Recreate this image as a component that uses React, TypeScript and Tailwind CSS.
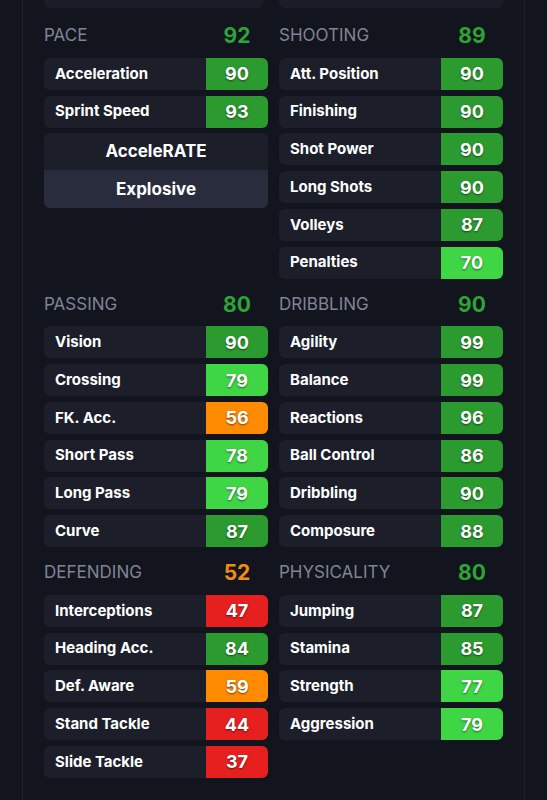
import React from 'react';

type Stat = { label: string; value: number };

interface Group {
  title: string;
  total: number;
  stats: Stat[];
  playstyle?: boolean;
}

const groups: Group[] = [
  {
    title: 'PACE',
    total: 92,
    stats: [
      { label: 'Acceleration', value: 90 },
      { label: 'Sprint Speed', value: 93 },
    ],
    playstyle: true,
  },
  {
    title: 'SHOOTING',
    total: 89,
    stats: [
      { label: 'Att. Position', value: 90 },
      { label: 'Finishing', value: 90 },
      { label: 'Shot Power', value: 90 },
      { label: 'Long Shots', value: 90 },
      { label: 'Volleys', value: 87 },
      { label: 'Penalties', value: 70 },
    ],
  },
  {
    title: 'PASSING',
    total: 80,
    stats: [
      { label: 'Vision', value: 90 },
      { label: 'Crossing', value: 79 },
      { label: 'FK. Acc.', value: 56 },
      { label: 'Short Pass', value: 78 },
      { label: 'Long Pass', value: 79 },
      { label: 'Curve', value: 87 },
    ],
  },
  {
    title: 'DRIBBLING',
    total: 90,
    stats: [
      { label: 'Agility', value: 99 },
      { label: 'Balance', value: 99 },
      { label: 'Reactions', value: 96 },
      { label: 'Ball Control', value: 86 },
      { label: 'Dribbling', value: 90 },
      { label: 'Composure', value: 88 },
    ],
  },
  {
    title: 'DEFENDING',
    total: 52,
    stats: [
      { label: 'Interceptions', value: 47 },
      { label: 'Heading Acc.', value: 84 },
      { label: 'Def. Aware', value: 59 },
      { label: 'Stand Tackle', value: 44 },
      { label: 'Slide Tackle', value: 37 },
    ],
  },
  {
    title: 'PHYSICALITY',
    total: 80,
    stats: [
      { label: 'Jumping', value: 87 },
      { label: 'Stamina', value: 85 },
      { label: 'Strength', value: 77 },
      { label: 'Aggression', value: 79 },
    ],
  },
];

function boxColor(v: number) {
  if (v >= 80) return 'bg-[#2b9b30]';
  if (v >= 70) return 'bg-[#3fd646]';
  if (v >= 50) return 'bg-[#ff8b00]';
  return 'bg-[#e61f1f]';
}

function totalColor(v: number) {
  if (v >= 70) return 'text-[#2ea337]';
  if (v >= 50) return 'text-[#f28b12]';
  return 'text-[#e61f1f]';
}

function StatRow({ stat }: { stat: Stat }) {
  return (
    <div className="flex h-8 overflow-hidden rounded-[6px] bg-[#1c1f2a]">
      <div className="flex flex-1 items-center pl-[11px] text-[15px] font-bold text-white">
        {stat.label}
      </div>
      <div
        className={`flex w-[62px] items-center justify-center text-[18px] font-bold text-white [text-shadow:0_1px_2px_rgba(0,0,0,0.55)] ${boxColor(stat.value)}`}
      >
        {stat.value}
      </div>
    </div>
  );
}

function Section({ group }: { group: Group }) {
  return (
    <div className="flex flex-col gap-[5.75px]">
      <div className="flex h-8 items-center justify-between">
        <span className="text-[17px] text-[#7f8496]">{group.title}</span>
        <span className={`w-[62px] text-center text-[21px] font-bold ${totalColor(group.total)}`}>
          {group.total}
        </span>
      </div>
      {group.stats.map((s) => (
        <StatRow key={s.label} stat={s} />
      ))}
      {group.playstyle && (
        <div className="overflow-hidden rounded-[6px] text-[17px] font-bold text-white">
          <div className="flex h-[37px] items-center justify-center bg-[#1c1f2a]">AcceleRATE</div>
          <div className="flex h-[38px] items-center justify-center bg-[#292c3d]">Explosive</div>
        </div>
      )}
    </div>
  );
}

export default function App() {
  return (
    <div className="min-h-[800px] bg-[#12151d] font-['Inter',sans-serif]">
      <div className="mx-[22px] min-h-[800px] border-x border-[#1d212b] px-[21px]">
        <div className="grid grid-cols-2 gap-x-[11px] gap-y-[10px]">
          <div className="mb-[2px] h-[8px] w-[219px] rounded-b-[6px] bg-[#1a1d27]" />
          <div className="mb-[2px] h-[8px] rounded-b-[6px] bg-[#1a1d27]" />
          {groups.map((g) => (
            <Section key={g.title} group={g} />
          ))}
        </div>
      </div>
    </div>
  );
}
